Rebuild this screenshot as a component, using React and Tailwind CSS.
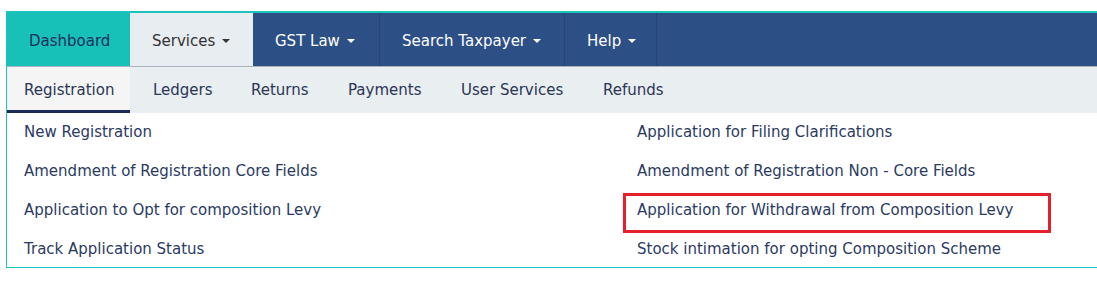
import React from 'react';

const Caret = ({ color = 'border-t-white' }) => (
  <span className={`ml-[7px] inline-block w-0 h-0 border-x-[4px] border-x-transparent border-t-[4px] ${color} align-middle`} />
);

const topNav = [
  { label: 'Dashboard', cls: 'w-[123px] bg-[#17c1b7] text-[#1b2f5e]' },
  { label: 'Services', caret: 'border-t-[#333]', cls: 'w-[123px] bg-[#e8edf1] text-[#333]' },
  { label: 'GST Law', caret: 'border-t-white', cls: 'w-[127px] text-white border-r border-[#26446f]' },
  { label: 'Search Taxpayer', caret: 'border-t-white', cls: 'w-[185px] text-white border-r border-[#26446f]' },
  { label: 'Help', caret: 'border-t-white', cls: 'w-[92px] text-white border-r border-[#26446f]' },
];

const subNav = [
  { label: 'Registration', cls: 'w-[123px] pl-[17px] bg-[#f5f5f5] border-b-[3px] border-[#1d2a55] pt-[3px]' },
  { label: 'Ledgers', cls: 'w-[102px] pl-[23px]' },
  { label: 'Returns', cls: 'w-[97px] pl-[19px]' },
  { label: 'Payments', cls: 'w-[113px] pl-[19px]' },
  { label: 'User Services', cls: 'w-[142px] pl-[19px]' },
  { label: 'Refunds', cls: 'pl-[19px]' },
];

const leftLinks = [
  'New Registration',
  'Amendment of Registration Core Fields',
  'Application to Opt for composition Levy',
  'Track Application Status',
];

const rightLinks = [
  'Application for Filing Clarifications',
  'Amendment of Registration Non - Core Fields',
  'Application for Withdrawal from Composition Levy',
  'Stock intimation for opting Composition Scheme',
];

export default function App() {
  return (
    <div className="w-full h-[282px] bg-white overflow-hidden pt-[11px] pl-[6px]" style={{ fontFamily: '"DejaVu Sans", Verdana, sans-serif' }}>
      <div className="border-l border-t-2 border-b border-[#1cc4bd] w-full">
        {/* Menu principal */}
        <nav className="flex h-[54px] bg-[#2c4f86] text-[15px] border-b border-[#aab4c0]">
          {topNav.map((item) => (
            <div key={item.label} className={`flex items-center pl-[22px] pt-[3px] whitespace-nowrap ${item.cls}`}>
              {item.label}
              {item.caret && <Caret color={item.caret} />}
            </div>
          ))}
        </nav>

        {/* Sous-menu */}
        <div className="flex h-[46px] bg-[#e9eef1] text-[15px] text-[#2a3557]">
          {subNav.map((tab) => (
            <div key={tab.label} className={`flex items-center whitespace-nowrap ${tab.cls}`}>
              {tab.label}
            </div>
          ))}
        </div>

        {/* Liens */}
        <div className="grid grid-cols-[613px_1fr] h-[154px] text-[15px] text-[#2b3a63]">
          <div>
            {leftLinks.map((l) => (
              <div key={l} className="h-[39px] flex items-center pl-[17px]">{l}</div>
            ))}
          </div>
          <div>
            {rightLinks.map((l, i) => (
              <div key={l} className="relative h-[39px] flex items-center pl-[17px]">
                {l}
                {i === 2 && (
                  <span className="absolute left-[3px] top-[2px] w-[428px] h-[40px] border-[3px] border-[#e3202b]" />
                )}
              </div>
            ))}
          </div>
        </div>
      </div>
    </div>
  );
}
